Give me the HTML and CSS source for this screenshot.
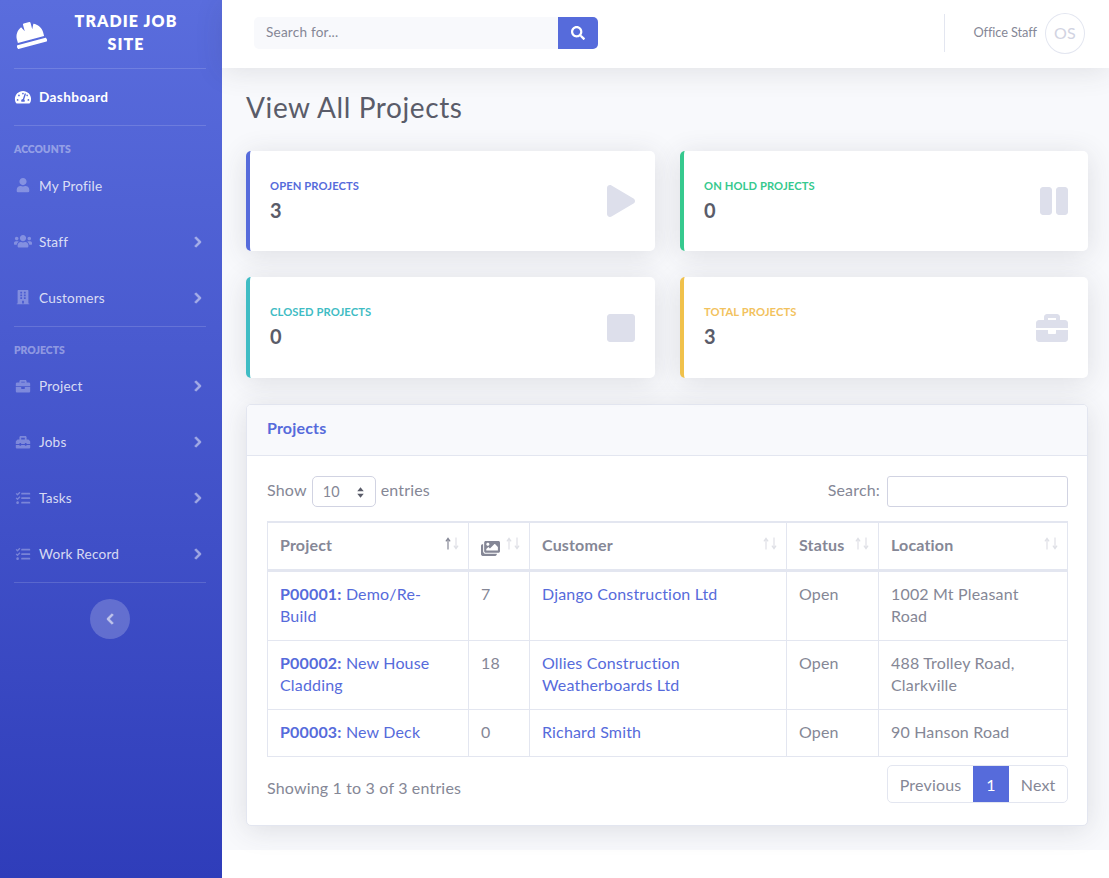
FILE: index.html
```html
<!DOCTYPE html>
<html lang="en">
<head>
<meta charset="utf-8">
<title>View All Projects</title>
<link rel="stylesheet" href="styles.css">
</head>
<body>
<svg class="defs" aria-hidden="true">
<symbol id="i-search" viewBox="0 0 512 512"><path d="M505 442.7L405.3 343c-4.5-4.5-10.6-7-17-7H372c27.6-35.3 44-79.7 44-128C416 93.1 322.9 0 208 0S0 93.1 0 208s93.1 208 208 208c48.3 0 92.7-16.4 128-44v16.3c0 6.4 2.5 12.5 7 17l99.7 99.7c9.4 9.4 24.6 9.4 33.9 0l28.3-28.3c9.4-9.4 9.4-24.6.1-34zM208 336c-70.7 0-128-57.2-128-128 0-70.7 57.2-128 128-128 70.7 0 128 57.2 128 128 0 70.7-57.2 128-128 128z"/></symbol>
<symbol id="i-user" viewBox="0 0 448 512"><path d="M224 256c70.7 0 128-57.3 128-128S294.7 0 224 0 96 57.3 96 128s57.3 128 128 128zm89.6 32h-16.7c-22.2 10.2-46.9 16-72.9 16s-50.6-5.8-72.9-16h-16.7C60.2 288 0 348.2 0 422.4V464c0 26.5 21.5 48 48 48h352c26.5 0 48-21.5 48-48v-41.6c0-74.2-60.2-134.4-134.4-134.4z"/></symbol>
<symbol id="i-right" viewBox="0 0 320 512"><path d="M285.476 272.971L91.132 467.314c-9.373 9.373-24.569 9.373-33.941 0l-22.667-22.667c-9.357-9.357-9.375-24.522-.04-33.901L188.505 256 34.484 101.255c-9.335-9.379-9.317-24.544.04-33.901l22.667-22.667c9.373-9.373 24.569-9.373 33.941 0L285.475 239.03c9.373 9.372 9.373 24.568.001 33.941z"/></symbol>
<symbol id="i-left" viewBox="0 0 320 512"><path d="M34.52 239.03L228.87 44.69c9.37-9.37 24.57-9.37 33.94 0l22.67 22.67c9.36 9.36 9.37 24.52.04 33.9L131.49 256l154.02 154.75c9.34 9.38 9.32 24.54-.04 33.9l-22.67 22.67c-9.37 9.37-24.57 9.37-33.94 0L34.52 272.97c-9.37-9.37-9.37-24.57 0-33.94z"/></symbol>
<symbol id="i-play" viewBox="0 0 448 512"><path d="M424.4 214.7L72.4 6.6C43.8-10.3 0 6.1 0 47.9V464c0 37.5 40.7 60.1 72.4 41.3l352-208c31.4-18.5 31.5-64.1 0-82.6z"/></symbol>
<symbol id="i-pause" viewBox="0 0 448 512"><path d="M144 479H48c-26.5 0-48-21.5-48-48V79c0-26.5 21.5-48 48-48h96c26.5 0 48 21.5 48 48v352c0 26.5-21.5 48-48 48zm304-48V79c0-26.5-21.5-48-48-48h-96c-26.5 0-48 21.5-48 48v352c0 26.5 21.5 48 48 48h96c26.5 0 48-21.5 48-48z"/></symbol>
<symbol id="i-stop" viewBox="0 0 448 512"><path d="M400 32H48C21.5 32 0 53.5 0 80v352c0 26.5 21.5 48 48 48h352c26.5 0 48-21.5 48-48V80c0-26.5-21.5-48-48-48z"/></symbol>
<symbol id="i-briefcase" viewBox="0 0 512 512"><path d="M320 336c0 8.84-7.16 16-16 16h-96c-8.84 0-16-7.16-16-16v-48H0v144c0 25.6 22.4 48 48 48h416c25.6 0 48-22.4 48-48V288H320v48zm144-208h-80V80c0-25.6-22.4-48-48-48H176c-25.6 0-48 22.4-48 48v48H48c-25.6 0-48 22.4-48 48v80h512v-80c0-25.6-22.4-48-48-48zm-144 0H192V96h128v32z"/></symbol>
<symbol id="i-toolbox" viewBox="0 0 512 512"><path d="M502.63 214.63l-45.25-45.25c-6-6-14.14-9.37-22.63-9.37H384V80c0-26.51-21.49-48-48-48H176c-26.51 0-48 21.49-48 48v80H77.25c-8.49 0-16.62 3.37-22.63 9.37L9.37 214.63c-6 6-9.37 14.14-9.37 22.63V320h128v-16c0-8.84 7.16-16 16-16h32c8.84 0 16 7.16 16 16v16h128v-16c0-8.84 7.16-16 16-16h32c8.84 0 16 7.16 16 16v16h128v-82.75c0-8.48-3.37-16.62-9.37-22.62zM320 160H192V96h128v64zm64 208c0 8.84-7.16 16-16 16h-32c-8.84 0-16-7.16-16-16v-16H192v16c0 8.84-7.16 16-16 16h-32c-8.84 0-16-7.16-16-16v-16H0v96c0 17.67 14.33 32 32 32h448c17.67 0 32-14.33 32-32v-96H384v16z"/></symbol>
<symbol id="i-users" viewBox="0 0 640 512"><path d="M96 224c35.3 0 64-28.7 64-64s-28.7-64-64-64-64 28.7-64 64 28.7 64 64 64zm448 0c35.3 0 64-28.7 64-64s-28.7-64-64-64-64 28.7-64 64 28.7 64 64 64zm32 32h-64c-17.6 0-33.5 7.1-45.1 18.6 40.3 22.1 68.9 62 75.1 109.4h66c17.7 0 32-14.3 32-32v-32c0-35.3-28.7-64-64-64zm-256 0c61.9 0 112-50.1 112-112S381.9 32 320 32 208 82.1 208 144s50.1 112 112 112zm76.8 32h-8.3c-20.8 10-43.9 16-68.5 16s-47.6-6-68.5-16h-8.3C179.6 288 128 339.6 128 403.2V432c0 26.5 21.5 48 48 48h288c26.5 0 48-21.5 48-48v-28.8c0-63.6-51.6-115.2-115.2-115.2zm-223.7-13.4C161.5 263.1 145.6 256 128 256H64c-35.3 0-64 28.7-64 64v32c0 17.7 14.3 32 32 32h65.9c6.3-47.4 34.9-87.3 75.2-109.4z"/></symbol>
<symbol id="i-building" viewBox="0 0 448 512"><path d="M436 480h-20V24c0-13.255-10.745-24-24-24H56C42.745 0 32 10.745 32 24v456H12c-6.627 0-12 5.373-12 12v20h448v-20c0-6.627-5.373-12-12-12zM128 76c0-6.627 5.373-12 12-12h40c6.627 0 12 5.373 12 12v40c0 6.627-5.373 12-12 12h-40c-6.627 0-12-5.373-12-12V76zm0 96c0-6.627 5.373-12 12-12h40c6.627 0 12 5.373 12 12v40c0 6.627-5.373 12-12 12h-40c-6.627 0-12-5.373-12-12v-40zm52 148h-40c-6.627 0-12-5.373-12-12v-40c0-6.627 5.373-12 12-12h40c6.627 0 12 5.373 12 12v40c0 6.627-5.373 12-12 12zm76 160h-64v-84c0-6.627 5.373-12 12-12h40c6.627 0 12 5.373 12 12v84zm64-172c0 6.627-5.373 12-12 12h-40c-6.627 0-12-5.373-12-12v-40c0-6.627 5.373-12 12-12h40c6.627 0 12 5.373 12 12v40zm0-96c0 6.627-5.373 12-12 12h-40c-6.627 0-12-5.373-12-12v-40c0-6.627 5.373-12 12-12h40c6.627 0 12 5.373 12 12v40zm0-96c0 6.627-5.373 12-12 12h-40c-6.627 0-12-5.373-12-12V76c0-6.627 5.373-12 12-12h40c6.627 0 12 5.373 12 12v40z"/></symbol>
<symbol id="i-tasks" viewBox="0 0 512 512"><path d="M139.61 35.5a12 12 0 0 0-17 0L58.93 98.81l-22.7-22.12a12 12 0 0 0-17 0L3.53 92.41a12 12 0 0 0 0 17l47.59 47.4a12.78 12.78 0 0 0 17.61 0l15.59-15.62L156.52 69a12.09 12.09 0 0 0 .09-17zm0 159.19a12 12 0 0 0-17 0l-63.68 63.72-22.7-22.1a12 12 0 0 0-17 0L3.53 252a12 12 0 0 0 0 17L51 316.5a12.77 12.77 0 0 0 17.6 0l15.7-15.69 72.2-72.22a12 12 0 0 0 .09-16.9zM64 368c-26.49 0-48.59 21.5-48.59 48S37.53 464 64 464a48 48 0 0 0 0-96zm432 16H208a16 16 0 0 0-16 16v32a16 16 0 0 0 16 16h288a16 16 0 0 0 16-16v-32a16 16 0 0 0-16-16zm0-320H208a16 16 0 0 0-16 16v32a16 16 0 0 0 16 16h288a16 16 0 0 0 16-16V80a16 16 0 0 0-16-16zm0 160H208a16 16 0 0 0-16 16v32a16 16 0 0 0 16 16h288a16 16 0 0 0 16-16v-32a16 16 0 0 0-16-16z"/></symbol>
<symbol id="i-gauge" viewBox="0 0 576 512"><path d="M288 32C128.94 32 0 160.94 0 320c0 52.8 14.25 102.26 39.06 144.8 5.61 9.62 16.3 15.2 27.44 15.2h443c11.14 0 21.83-5.58 27.44-15.2C561.75 422.26 576 372.8 576 320c0-159.06-128.94-288-288-288zm0 64c14.71 0 26.58 10.13 30.32 23.65-1.11 2.26-2.64 4.23-3.45 6.67l-9.22 27.67c-5.13 3.49-10.97 6.01-17.64 6.01-17.67 0-32-14.33-32-32S270.33 96 288 96zM96 384c-17.67 0-32-14.33-32-32s14.33-32 32-32 32 14.33 32 32-14.33 32-32 32zm48-160c-17.67 0-32-14.33-32-32s14.33-32 32-32 32 14.33 32 32-14.33 32-32 32zm246.77-72.41l-61.33 184C343.13 347.33 352 364.54 352 384c0 11.72-3.38 22.55-8.88 32H232.88c-5.5-9.45-8.88-20.28-8.88-32 0-33.94 26.5-61.43 59.9-63.59l61.34-184.01c4.17-12.56 17.73-19.45 30.36-15.17 12.57 4.19 19.35 17.79 15.17 30.36zm14.66 57.2l15.52-46.55c3.47-1.29 7.13-2.23 11.05-2.23 17.67 0 32 14.33 32 32s-14.33 32-32 32c-11.38-.01-20.89-6.28-26.57-15.22zM480 384c-17.67 0-32-14.33-32-32s14.33-32 32-32 32 14.33 32 32-14.33 32-32 32z"/></symbol>
<symbol id="i-images" viewBox="0 0 576 512"><path d="M480 416v16c0 26.51-21.49 48-48 48H48c-26.51 0-48-21.49-48-48V176c0-26.51 21.49-48 48-48h16v208c0 44.112 35.888 80 80 80h336zm96-80V80c0-26.51-21.49-48-48-48H144c-26.51 0-48 21.49-48 48v256c0 26.51 21.49 48 48 48h384c26.51 0 48-21.49 48-48zM256 128c0 26.51-21.49 48-48 48s-48-21.49-48-48 21.49-48 48-48 48 21.49 48 48zm-96 144l55.515-55.515c4.686-4.686 12.284-4.686 16.971 0L272 256l135.515-135.515c4.686-4.686 12.284-4.686 16.971 0L512 208v112H160v-48z"/></symbol>
<symbol id="i-hat" viewBox="0 0 512 512"><path d="M480 288c0-80.25-49.28-148.92-119.19-177.62L320 192V80c0-8.84-7.16-16-16-16h-96c-8.84 0-16 7.16-16 16v112l-40.81-81.62C81.28 139.08 32 207.75 32 288v64h448v-64zm16 96H16c-8.84 0-16 7.16-16 16v32c0 8.84 7.16 16 16 16h480c8.84 0 16-7.16 16-16v-32c0-8.84-7.16-16-16-16z"/></symbol>
</svg>

<div class="wrapper">
  <aside class="sidebar">
    <a class="brand" href="#">
      <svg class="brand-icon"><use href="#i-hat"/></svg>
      <span class="brand-text">TRADIE JOB SITE</span>
    </a>
    <hr class="side-rule">
    <a class="nav-item active" href="#"><svg class="nav-icon"><use href="#i-gauge"/></svg><span>Dashboard</span></a>
    <hr class="side-rule">
    <div class="side-heading">Accounts</div>
    <a class="nav-item" href="#"><svg class="nav-icon"><use href="#i-user"/></svg><span>My Profile</span></a>
    <a class="nav-item" href="#"><svg class="nav-icon"><use href="#i-users"/></svg><span>Staff</span><svg class="nav-arrow"><use href="#i-right"/></svg></a>
    <a class="nav-item" href="#"><svg class="nav-icon"><use href="#i-building"/></svg><span>Customers</span><svg class="nav-arrow"><use href="#i-right"/></svg></a>
    <hr class="side-rule">
    <div class="side-heading">Projects</div>
    <a class="nav-item" href="#"><svg class="nav-icon"><use href="#i-briefcase"/></svg><span>Project</span><svg class="nav-arrow"><use href="#i-right"/></svg></a>
    <a class="nav-item" href="#"><svg class="nav-icon"><use href="#i-toolbox"/></svg><span>Jobs</span><svg class="nav-arrow"><use href="#i-right"/></svg></a>
    <a class="nav-item" href="#"><svg class="nav-icon"><use href="#i-tasks"/></svg><span>Tasks</span><svg class="nav-arrow"><use href="#i-right"/></svg></a>
    <a class="nav-item" href="#"><svg class="nav-icon"><use href="#i-tasks"/></svg><span>Work Record</span><svg class="nav-arrow"><use href="#i-right"/></svg></a>
    <hr class="side-rule">
    <button class="side-toggle" type="button" aria-label="Collapse sidebar"><svg><use href="#i-left"/></svg></button>
  </aside>

  <div class="content">
    <header class="topbar">
      <form class="search">
        <input class="search-input" type="text" placeholder="Search for...">
        <button class="search-btn" type="button" aria-label="Search"><svg><use href="#i-search"/></svg></button>
      </form>
      <div class="user">
        <span class="user-name">Office Staff</span>
        <span class="avatar">OS</span>
      </div>
    </header>

    <main class="main">
      <h1 class="page-title">View All Projects</h1>

      <section class="stats">
        <div class="stat stat-blue"><div class="stat-text"><div class="stat-label">Open Projects</div><div class="stat-value">3</div></div><svg class="stat-icon"><use href="#i-play"/></svg></div>
        <div class="stat stat-green"><div class="stat-text"><div class="stat-label">On Hold Projects</div><div class="stat-value">0</div></div><svg class="stat-icon"><use href="#i-pause"/></svg></div>
        <div class="stat stat-teal"><div class="stat-text"><div class="stat-label">Closed Projects</div><div class="stat-value">0</div></div><svg class="stat-icon"><use href="#i-stop"/></svg></div>
        <div class="stat stat-yellow"><div class="stat-text"><div class="stat-label">Total Projects</div><div class="stat-value">3</div></div><svg class="stat-icon wide"><use href="#i-briefcase"/></svg></div>
      </section>

      <section class="panel">
        <h2 class="panel-head">Projects</h2>
        <div class="panel-body">
          <div class="dt-top">
            <label class="dt-length"><span class="dt-text">Show</span><span class="select">10<svg viewBox="0 0 10 16"><path d="M5 1.5 9 6.5H1zM5 14.5 1 9.5H9z"/></svg></span><span class="dt-text">entries</span></label>
            <label class="dt-filter"><span class="dt-text">Search:</span><input class="dt-input" type="search"></label>
          </div>
          <table class="table">
            <colgroup><col class="c1"><col class="c2"><col class="c3"><col class="c4"><col class="c5"></colgroup>
            <thead>
              <tr>
                <th>Project<svg class="sort on" viewBox="0 0 15 13"><path class="up" d="M3 12.5V1.5M.9 4.3 3 1.2 5.1 4.3"/><path class="down" d="M11 .5V11.5M8.9 8.7 11 11.8 13.1 8.7"/></svg></th>
                <th><svg class="th-icon"><use href="#i-images"/></svg><svg class="sort" viewBox="0 0 15 13"><path class="up" d="M3 12.5V1.5M.9 4.3 3 1.2 5.1 4.3"/><path class="down" d="M11 .5V11.5M8.9 8.7 11 11.8 13.1 8.7"/></svg></th>
                <th>Customer<svg class="sort" viewBox="0 0 15 13"><path class="up" d="M3 12.5V1.5M.9 4.3 3 1.2 5.1 4.3"/><path class="down" d="M11 .5V11.5M8.9 8.7 11 11.8 13.1 8.7"/></svg></th>
                <th>Status<svg class="sort" viewBox="0 0 15 13"><path class="up" d="M3 12.5V1.5M.9 4.3 3 1.2 5.1 4.3"/><path class="down" d="M11 .5V11.5M8.9 8.7 11 11.8 13.1 8.7"/></svg></th>
                <th>Location<svg class="sort" viewBox="0 0 15 13"><path class="up" d="M3 12.5V1.5M.9 4.3 3 1.2 5.1 4.3"/><path class="down" d="M11 .5V11.5M8.9 8.7 11 11.8 13.1 8.7"/></svg></th>
              </tr>
            </thead>
            <tbody>
              <tr>
                <td><a href="#"><b>P00001:</b> Demo/Re-Build</a></td>
                <td>7</td>
                <td><a href="#">Django Construction Ltd</a></td>
                <td>Open</td>
                <td>1002 Mt Pleasant Road</td>
              </tr>
              <tr>
                <td><a href="#"><b>P00002:</b> New House Cladding</a></td>
                <td>18</td>
                <td><a href="#">Ollies Construction Weatherboards Ltd</a></td>
                <td>Open</td>
                <td>488 Trolley Road, Clarkville</td>
              </tr>
              <tr>
                <td><a href="#"><b>P00003:</b> New Deck</a></td>
                <td>0</td>
                <td><a href="#">Richard Smith</a></td>
                <td>Open</td>
                <td>90 Hanson Road</td>
              </tr>
            </tbody>
          </table>
          <div class="dt-bottom">
            <div class="dt-info">Showing 1 to 3 of 3 entries</div>
            <nav class="pager"><a href="#">Previous</a><a class="current" href="#">1</a><a href="#">Next</a></nav>
          </div>
        </div>
      </section>
    </main>
  </div>
</div>
</body>
</html>
```
FILE: styles.css
```css
* { box-sizing: border-box; }

html, body { margin: 0; padding: 0; }

body {
  background: #fff;
  color: #858796;
  font-family: "Lato", "Open Sans", sans-serif;
  font-size: 16px;
  line-height: 22px;
  letter-spacing: .17px;
}

a { color: inherit; text-decoration: none; }

.defs { display: none; }

.wrapper { display: flex; align-items: flex-start; }

/* Sidebar */
.sidebar {
  flex: 0 0 222px;
  min-height: 878px;
  display: flex;
  flex-direction: column;
  background: linear-gradient(180deg, #5a6ddd 0%, #2f3dba 100%);
  color: rgba(255, 255, 255, .8);
}

.brand {
  height: 68px;
  display: flex;
  align-items: center;
  padding: 0 15px 0 14px;
  color: #fff;
}

.brand-icon {
  flex: 0 0 31px;
  width: 31px;
  height: 32px;
  fill: #fff;
  transform: rotate(-15deg);
}

.brand-text {
  flex: 1;
  padding: 0 15px 4px 15px;
  text-align: center;
  font-size: 16px;
  line-height: 23px;
  font-weight: 800;
  letter-spacing: 1.1px;
}

.side-rule {
  width: 192px;
  height: 1px;
  margin: 0 0 0 14px;
  border: 0;
  background: rgba(255, 255, 255, .15);
  flex: none;
}

.nav-item {
  height: 56px;
  flex: none;
  display: flex;
  align-items: center;
  padding: 0 20px 0 14px;
  font-size: 13.6px;
  font-weight: 400;
  letter-spacing: .2px;
}

.nav-item.active {
  color: #fff;
  font-weight: 700;
  letter-spacing: .4px;
}

.nav-icon {
  width: 18px;
  height: 14.4px;
  margin-right: 7px;
  flex: none;
  fill: rgba(255, 255, 255, .3);
}

.nav-item.active .nav-icon { fill: #fff; }

.nav-arrow {
  width: 8px;
  height: 12px;
  margin-left: auto;
  fill: #fff;
  stroke: #fff;
  stroke-width: 36px;
  opacity: .5;
}

.side-heading {
  height: 20px;
  flex: none;
  margin: 13px 0 -1.5px;
  padding-left: 14px;
  font-size: 10.4px;
  line-height: 20px;
  font-weight: 800;
  letter-spacing: 0;
  text-transform: uppercase;
  color: rgba(255, 255, 255, .4);
}

.side-toggle {
  width: 40px;
  height: 40px;
  margin: 16px 0 0 90px;
  padding: 0;
  display: flex;
  align-items: center;
  justify-content: center;
  border: 0;
  border-radius: 50%;
  background: rgba(255, 255, 255, .2);
}

.side-toggle svg {
  width: 8px;
  height: 12px;
  fill: #fff;
  stroke: #fff;
  stroke-width: 36px;
  opacity: .6;
}

/* Top bar */
.content { flex: 1; min-width: 0; }

.topbar {
  position: relative;
  z-index: 2;
  height: 68px;
  display: flex;
  align-items: center;
  justify-content: space-between;
  padding: 0 24px 2px 32px;
  background: #fff;
  box-shadow: 0 4px 28px rgba(58, 59, 69, .12);
}

.search { display: flex; width: 344px; height: 32px; }

.search-input {
  flex: 1;
  min-width: 0;
  padding: 0 12px 2px;
  border: 0;
  border-radius: 5px 0 0 5px;
  outline: 0;
  background: #f8f9fc;
  font: inherit;
  font-size: 13.6px;
  letter-spacing: .2px;
  color: #6e707e;
}

.search-input::placeholder { color: #858796; opacity: 1; }

.search-btn {
  flex: 0 0 40px;
  padding: 0;
  display: flex;
  align-items: center;
  justify-content: center;
  border: 0;
  border-radius: 0 5px 5px 0;
  background: #566bdb;
}

.search-btn svg { width: 14px; height: 14px; fill: #fff; }

.user {
  height: 38px;
  display: flex;
  align-items: center;
  gap: 8px;
  padding-left: 28px;
  border-left: 1px solid #e3e6f0;
}

.user-name {
  padding-bottom: 3px;
  font-size: 12.8px;
  letter-spacing: -.1px;
}

.avatar {
  width: 40px;
  height: 41px;
  flex: none;
  display: flex;
  align-items: center;
  justify-content: center;
  border: 1px solid #e3e6f0;
  border-radius: 50%;
  font-size: 16px;
  color: #d1d3e2;
}

/* Main */
.main {
  padding: 22px 21px 24px 24px;
  background: #f8f9fc;
}

.page-title {
  margin: 0 0 26px;
  font-size: 28px;
  line-height: 35px;
  font-weight: 400;
  letter-spacing: .6px;
  color: #5a5c69;
}

.stats {
  display: grid;
  grid-template-columns: 409px 408px;
  grid-template-rows: 100px 101px;
  gap: 26px 25px;
  margin-bottom: 26px;
}

.stat {
  display: flex;
  align-items: center;
  justify-content: space-between;
  padding: 0 20px;
  background: #fff;
  border-left: 4px solid;
  border-radius: 5px;
  box-shadow: 0 4px 28px rgba(58, 59, 69, .14);
}

.stat-text { padding-bottom: 2px; }

.stat-label {
  font-size: 11.2px;
  line-height: 14px;
  font-weight: 700;
  letter-spacing: .1px;
  text-transform: uppercase;
}

.stat-value {
  margin-top: 5px;
  font-size: 20px;
  line-height: 24px;
  font-weight: 700;
  color: #5a5c69;
}

.stat-icon { width: 28px; height: 32px; fill: #dddfeb; }
.stat-icon.wide { width: 32px; }

.stat-blue { border-color: #566bdb; }
.stat-blue .stat-label { color: #566bdb; }
.stat-green { border-color: #36c98e; }
.stat-green .stat-label { color: #36c98e; }
.stat-teal { border-color: #3fbcc4; }
.stat-teal .stat-label { color: #3fbcc4; }
.stat-yellow { border-color: #f0c14b; }
.stat-yellow .stat-label { color: #f2c25e; }

.panel {
  background: #fff;
  border: 1px solid #e3e6f0;
  border-radius: 5px;
  box-shadow: 0 4px 28px rgba(58, 59, 69, .14);
  overflow: hidden;
}

.panel-head {
  height: 51px;
  margin: 0;
  padding: 0 20px 4px;
  display: flex;
  align-items: center;
  background: #f8f9fc;
  border-bottom: 1px solid #e3e6f0;
  font-size: 16px;
  font-weight: 700;
  color: #566bdb;
}

.panel-body { padding: 20px 19px 22px 20px; }

.dt-top {
  height: 31px;
  display: flex;
  align-items: center;
  justify-content: space-between;
  margin-bottom: 14px;
}

.dt-length, .dt-filter { display: flex; align-items: center; }

.dt-text { padding-bottom: 4px; }

.select {
  width: 64px;
  height: 31px;
  margin: 0 5px;
  padding: 1px 10px 0;
  display: flex;
  align-items: center;
  justify-content: space-between;
  border: 1px solid #d1d3e2;
  border-radius: 5px;
  font-size: 14.4px;
}

.select svg { width: 9px; height: 13px; fill: #5a5c69; }

.dt-input {
  width: 181px;
  height: 31px;
  margin-left: 7px;
  border: 1px solid #d1d3e2;
  border-radius: 3px;
  background: #fff;
  outline: 0;
}

.table {
  width: 800px;
  table-layout: fixed;
  border-collapse: collapse;
}

.c1 { width: 201px; }
.c2 { width: 61px; }
.c3 { width: 257px; }
.c4 { width: 92px; }
.c5 { width: 189px; }

.table th, .table td {
  position: relative;
  padding: 11px 12px 13px;
  border: 1px solid #e3e6f0;
  text-align: left;
  vertical-align: top;
}

.table th {
  padding: 11px 12px 12px;
  border-top-width: 2px;
  border-bottom-width: 3px;
  font-weight: 700;
}

.table a { color: #566bdb; }

.th-icon {
  width: 19px;
  height: 17px;
  margin-top: 6px;
  fill: #858796;
  display: block;
}

.sort {
  position: absolute;
  top: 14px;
  right: 8px;
  width: 15px;
  height: 13px;
  fill: none;
  stroke-width: 1.2;
  stroke: #dfe0e6;
}

.sort.on .up { stroke: #858796; }

.dt-bottom {
  display: flex;
  align-items: center;
  justify-content: space-between;
  margin-top: 8px;
}

.dt-info { padding-top: 7px; }

.pager {
  display: flex;
  height: 38px;
  border: 1px solid #e3e6f0;
  border-radius: 5px;
  overflow: hidden;
}

.pager a { padding: 8px 11.5px 6px; }
.pager a.current { background: #566bdb; color: #fff; padding: 8px 13.5px 6px; }
```
